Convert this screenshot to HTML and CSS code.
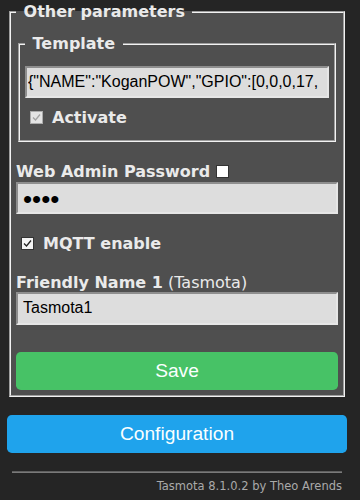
FILE: index.html
```html
<!DOCTYPE html>
<html lang="en">
<head>
    <meta charset="UTF-8">
    <meta name="viewport" content="width=device-width, initial-scale=1.0">
    <title>Tasmota - Other parameters</title>
    <link rel="stylesheet" href="styles.css">
</head>
<body>
    <div class="page">
        <fieldset class="box">
            <legend><b>&nbsp;Other parameters&nbsp;</b></legend>
            <form class="form" onsubmit="return false;">
                <fieldset class="box inner">
                    <legend><b>&nbsp;Template&nbsp;</b></legend>
                    <p class="tpl-row"><input class="field tpl" value='{"NAME":"KoganPOW","GPIO":[0,0,0,17,133,132,0,0,131,52,21,0,0],"FLAG":0,"BASE":18}'></p>
                    <p class="check-row act">
                        <span class="check disabled"><svg viewBox="0 0 13 13" width="13" height="13"><polyline points="3,6.5 5.5,9 10,3.5" fill="none" stroke="#a3a3a3" stroke-width="1.3"/></svg></span><b>Activate</b>
                    </p>
                </fieldset>
                <div class="label-row wap"><b>Web Admin Password</b><span class="check plain"></span></div>
                <input class="field pass" type="password" value="abcd">
                <div class="check-row mqtt">
                    <span class="check on"><svg viewBox="0 0 13 13" width="13" height="13"><polyline points="3,6.5 5.5,9 10,3.5" fill="none" stroke="#222" stroke-width="1.3"/></svg></span><b>MQTT enable</b>
                </div>
                <div class="label-row fname"><b>Friendly Name 1</b> (Tasmota)</div>
                <input class="field" value="Tasmota1">
                <button class="btn bgrn">Save</button>
            </form>
        </fieldset>
        <button class="btn cfg">Configuration</button>
        <div class="footer">
            <hr>
            <a href="#" class="credit">Tasmota 8.1.0.2 by Theo Arends</a>
        </div>
    </div>
</body>
</html>
```

FILE: styles.css
```css
body {
    margin: 0;
    background: #252525;
    font-family: "DejaVu Sans", Verdana, sans-serif;
    font-size: 16px;
    color: #eaeaea;
}
.page {
    width: 340px;
    margin: 0 7px;
    padding-top: 2px;
}
.box {
    margin: 0 2px;
    padding: 5px;
    border: 2px groove #f2f2f2;
    background: #4f4f4f;
    min-width: 0;
}
.box legend {
    padding: 0 2px;
}
.form {
    margin: 0;
}
.inner {
    margin-top: 8px;
}
p {
    margin: 8px 0;
}
.tpl-row {
    margin-top: 8px;
}
.act {
    margin-top: 11px;
    margin-bottom: 7px;
}
.field {
    display: block;
    width: 100%;
    height: 32.4px;
    box-sizing: border-box;
    padding: 5px;
    margin: 0;
    border: 2px solid;
    border-color: #8e8e8e #e6e6e6 #e6e6e6 #8e8e8e;
    background: #dddddd;
    color: #000000;
    font-family: "Liberation Sans", Arial, sans-serif;
    font-size: 16px;
    outline: none;
}
.tpl {
    padding-left: 1px;
    padding-right: 8px;
}
.pass {
    font-size: 26px;
    padding-top: 6px;
    padding-bottom: 2px;
}
.label-row {
    line-height: 18.6px;
}
.wap {
    margin-top: 21px;
}
.fname {
    margin-top: 20px;
}
.check-row {
    line-height: 18.6px;
}
.mqtt {
    margin-top: 21px;
}
.check {
    display: inline-block;
    width: 13px;
    height: 13px;
    box-sizing: border-box;
    vertical-align: -1px;
    margin: 0 9px 0 5px;
    position: relative;
}
.check svg {
    position: absolute;
    left: -1px;
    top: -1px;
}
.check.disabled {
    border: 1px solid #ababab;
    background: #e4e4e4;
}
.check.on {
    border: 1px solid #333333;
    background: #f4f4f4;
}
.check.plain {
    border: 1px solid #333333;
    background: #ffffff;
    margin: 0 0 0 6px;
}
.btn {
    display: block;
    width: 100%;
    border: 0;
    border-radius: 0.3rem;
    background: #1fa3ec;
    color: #faffff;
    line-height: 2.4rem;
    font-size: 1.2rem;
    font-family: "Liberation Sans", Arial, sans-serif;
    padding: 0;
    cursor: pointer;
}
.btn:hover {
    background: #0e70a4;
}
.bgrn {
    background: #47c266;
    margin-top: 27px;
}
.bgrn:hover {
    background: #5aaf6f;
}
.cfg {
    margin-top: 18px;
}
.footer {
    text-align: right;
    font-size: 11.5px;
    padding: 0 5px 5px;
    margin-top: 18px;
}
.footer hr {
    margin: 0 0 6px;
    border: 0;
    border-top: 1px solid #5f5f5f;
    border-bottom: 1px solid #7a7a7a;
}
.credit {
    color: #aaaaaa;
    text-decoration: none;
}
```
